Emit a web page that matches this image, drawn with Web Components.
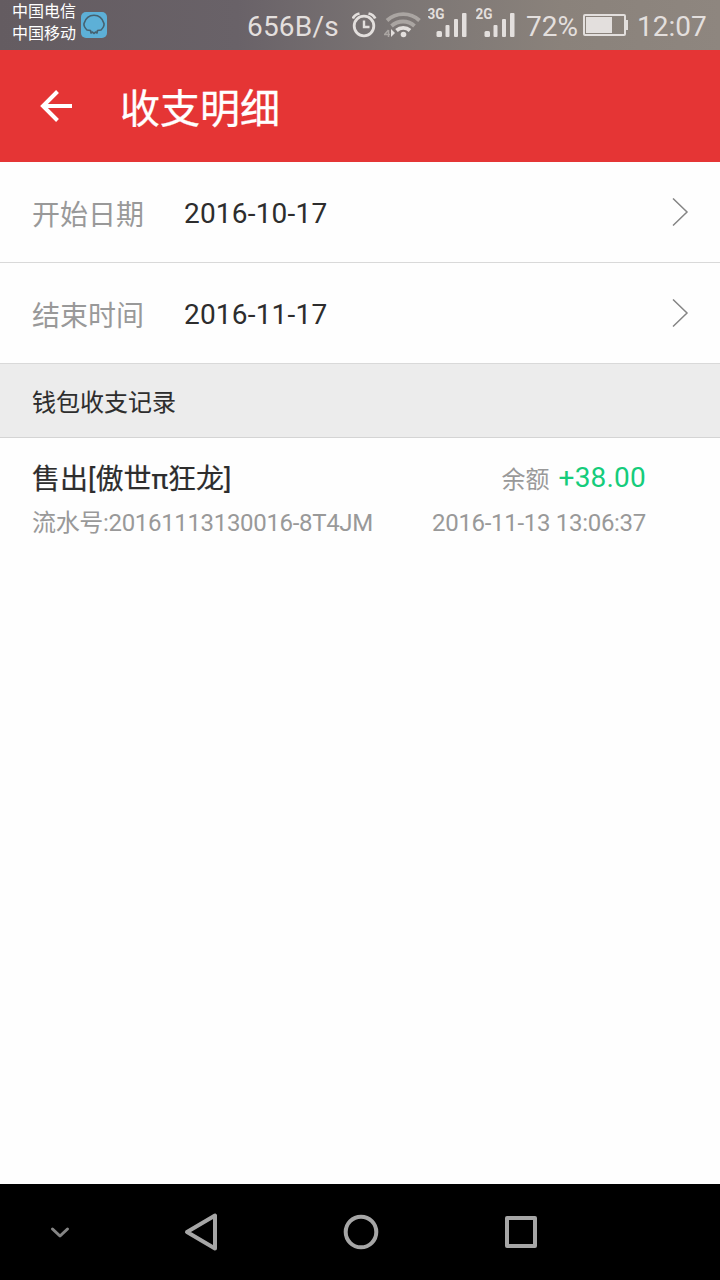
<!DOCTYPE html>
<html lang="zh-CN">
<head>
<meta charset="utf-8">
<title>收支明细</title>
<style>
  html, body {
    margin: 0;
    height: 100%;
  }

  body {
    display: flex;
    flex-direction: column;
    background: #fefefe;
    color: #2d2d2d;
    font-family: Roboto, "Noto Sans CJK SC", sans-serif;
    overflow: hidden;
  }

  main {
    flex: 1;
  }
</style>
</head>
<body>
  <status-bar speed="656B/s" battery="72%" time="12:07">
    <span>中国电信</span>
    <span>中国移动</span>
  </status-bar>
  <app-header>收支明细</app-header>
  <main>
    <date-row label="开始日期">2016-10-17</date-row>
    <date-row label="结束时间">2016-11-17</date-row>
    <section-title>钱包收支记录</section-title>
    <record-item>
      售出[傲世π狂龙]
      <span slot="label">余额</span>
      <span slot="amount">+38.00</span>
      <span slot="serial">流水号:20161113130016-8T4JM</span>
      <span slot="time">2016-11-13 13:06:37</span>
    </record-item>
  </main>
  <nav-bar></nav-bar>

<script>
class SignalIcon extends HTMLElement {
  constructor() {
    super();

    this.attachShadow({ mode: 'open' });
    this.shadowRoot.innerHTML = `
      <style>
        :host { display: block; width: 40px; height: 50px; }
        svg { display: block; }
        text { font: bold 14px Roboto, sans-serif; }
      </style>
      <svg width="40" height="50" fill="#e3dfdd">
        <text x="-.5" y="19" textLength="17" lengthAdjust="spacingAndGlyphs">${this.getAttribute('type')}</text>
        <rect x="8.500" y="31" width="5.5" height="6" rx="1.5"/>
        <rect x="17.500" y="25" width="4" height="12" rx="1"/>
        <rect x="26" y="19" width="4" height="18" rx="1"/>
        <rect x="34" y="13" width="4.500" height="24" rx="1"/>
      </svg>
    `;
  }
}

customElements.define('signal-icon', SignalIcon);

class StatusBar extends HTMLElement {
  constructor() {
    super();

    this.attachShadow({ mode: 'open' });
    this.shadowRoot.innerHTML = `
      <style>
        :host {
          display: flex;
          height: 50px;
          flex: none;
          box-sizing: border-box;
          padding: 0 12px;
          background: linear-gradient(90deg, #645c61 0%, #696268 33%, #7b7574 55%, #8a827b 78%, #8e867f 100%);
          color: #e3dfdd;
          font-size: 28px;
          line-height: 54px;
          white-space: nowrap;
        }
        svg { display: block; flex: none; }
        .carriers {
          display: flex;
          flex-direction: column;
          width: 69px;
          padding-top: 1px;
          font-size: 16px;
          line-height: 22px;
          color: #fff;
        }
        .speed { width: 105px; margin-left: 140px; letter-spacing: 0.2px; }
        .clock { width: 32px; }
        .wifi { width: 44px; }
        .battery { width: 57px; margin-left: 10px; }
        signal-icon + signal-icon { margin-left: 8px; }
        .battery-icon { margin-right: 9px; }
      </style>
      <div class="carriers"><slot></slot></div>
      <svg width="26" height="50">
        <rect y="12" width="26" height="26" rx="5" fill="#5db0d7"/>
        <path d="M10 33L9.500 30.500L6 30C4 28 2.500 26 3 23.500C4.500 18.500 8.500 15.300 13 15.300S21.500 18.500 23 23.500C23.500 26 22 28 20 30L16.500 30.500L16 33L14.500 32L13 33.500L11.500 32Z" fill="none" stroke="#46616f" stroke-width="1.6" stroke-linejoin="round"/>
      </svg>
      <div class="speed">${this.getAttribute('speed')}</div>
      <svg class="clock" width="32" height="50" fill="none" stroke="#e3dfdd">
        <circle cx="12" cy="26" r="9.800" stroke-width="2.800"/>
        <path d="M12 20.500v6.500h5.500" stroke-width="2.400"/>
        <path d="M.8 18.500C1.900 16 4.300 14.200 7.500 13.500M16.500 13.500C19.700 14.200 22.100 16 23.200 18.500" stroke-width="2.800"/>
      </svg>
      <svg class="wifi" width="44" height="50" fill="none">
        <path d="M3 20.500A24 24 0 0 1 35.500 20.500" stroke="#aaa5a2" stroke-width="3.800"/>
        <path d="M7.500 26A17 17 0 0 1 30.500 26" stroke="#aaa5a2" stroke-width="3.800"/>
        <path d="M12.500 30.500A10 10 0 0 1 26 30.500" stroke="#e3dfdd" stroke-width="3.800"/>
        <circle cx="19.500" cy="34.500" r="2.800" fill="#e3dfdd"/>
        <path d="M4.500 30v7M6 34.500H.5L4.500 30" stroke="#aaa5a2" stroke-width="1.500"/>
        <path d="M7 29v8L11 33Z" fill="#e3dfdd"/>
      </svg>
      <signal-icon type="3G"></signal-icon>
      <signal-icon type="2G"></signal-icon>
      <div class="battery">${this.getAttribute('battery')}</div>
      <svg class="battery-icon" width="45" height="50">
        <rect x="1" y="15" width="41" height="20" rx="1" fill="none" stroke="#e3dfdd" stroke-width="2"/>
        <rect x="3" y="17" width="26" height="16" fill="#e3dfdd"/>
        <path d="M43 20h2v10h-2z" fill="#e3dfdd"/>
      </svg>
      <div class="time">${this.getAttribute('time')}</div>
    `;
  }
}

customElements.define('status-bar', StatusBar);

class AppHeader extends HTMLElement {
  constructor() {
    super();

    this.attachShadow({ mode: 'open' });
    this.shadowRoot.innerHTML = `
      <style>
        :host {
          display: flex;
          flex: none;
          align-items: center;
          gap: 48px;
          height: 112px;
          box-sizing: border-box;
          padding-left: 40px;
          background: #e53535;
          color: #fff;
          font-size: 40px;
          line-height: 104px;
          -webkit-text-stroke: 0.3px;
        }
        div { padding-top: 8px; }
      </style>
      <svg width="32" height="32" fill="none" stroke="#fff" stroke-width="4">
        <path d="M32 16H3M17.500 1.500L3 16L17.500 30.500"/>
      </svg>
      <div><slot></slot></div>
    `;
  }
}

customElements.define('app-header', AppHeader);

class DateRow extends HTMLElement {
  constructor() {
    super();

    this.attachShadow({ mode: 'open' });
    this.shadowRoot.innerHTML = `
      <style>
        :host {
          display: flex;
          align-items: center;
          height: 101px;
          box-sizing: border-box;
          padding: 0 31px 0 32px;
          border-bottom: 1px solid #d9d9d9;
          font-size: 28px;
          line-height: 40px;
        }
        .label {
          width: 152px;
          padding-top: 8px;
          color: #999;
        }
        .value { flex: 1; padding-top: 4px; letter-spacing: 0.2px; }
      </style>
      <div class="label">${this.getAttribute('label')}</div>
      <div class="value"><slot></slot></div>
      <svg width="17" height="28" fill="none" stroke="#858585" stroke-width="1.500">
        <path d="M1 .5L15 14L1 27.500"/>
      </svg>
    `;
  }
}

customElements.define('date-row', DateRow);

class SectionTitle extends HTMLElement {
  constructor() {
    super();

    this.attachShadow({ mode: 'open' });
    this.shadowRoot.innerHTML = `
      <style>
        :host {
          display: block;
          height: 74px;
          box-sizing: border-box;
          padding-left: 32px;
          border-bottom: 1px solid #d4d4d4;
          background: #ececec;
          font-size: 24px;
          line-height: 78px;
          -webkit-text-stroke: 0.1px;
        }
      </style>
      <slot></slot>
    `;
  }
}

customElements.define('section-title', SectionTitle);

class RecordItem extends HTMLElement {
  constructor() {
    super();

    this.attachShadow({ mode: 'open' });
    this.shadowRoot.innerHTML = `
      <style>
        :host {
          display: block;
          padding: 18px 74px 0 32px;
          white-space: nowrap;
        }
        .row {
          display: flex;
          justify-content: space-between;
          font-size: 28px;
          line-height: 44px;
        }
        .title { padding-top: 2px; -webkit-text-stroke: 0.2px; }
        .right { display: flex; gap: 9px; }
        .label { padding-top: 2px; font-size: 24px; color: #999; }
        .amount { color: #15cc7b; letter-spacing: 0.2px; }
        .detail { font-size: 24px; line-height: 42px; color: #999; }
        .serial { letter-spacing: -0.33px; }
        .time { letter-spacing: -0.3px; }
      </style>
      <div class="row">
        <div class="title"><slot></slot></div>
        <div class="right">
          <div class="label"><slot name="label"></slot></div>
          <div class="amount"><slot name="amount"></slot></div>
        </div>
      </div>
      <div class="row detail">
        <div class="serial"><slot name="serial"></slot></div>
        <div class="time"><slot name="time"></slot></div>
      </div>
    `;
  }
}

customElements.define('record-item', RecordItem);

class NavBar extends HTMLElement {
  constructor() {
    super();

    this.attachShadow({ mode: 'open' });
    this.shadowRoot.innerHTML = `
      <style>
        :host {
          display: grid;
          flex: none;
          grid-template-columns: 120px 160px 160px 160px;
          place-items: center;
          height: 96px;
          background: #000;
        }
        svg { fill: none; stroke: #a6a6a6; stroke-width: 4; stroke-linejoin: round; stroke-linecap: round; }
      </style>
      <svg width="40" height="40"><path d="M12.500 17L20 24L27.500 17" style="stroke: #858585; stroke-width: 3"/></svg>
      <svg width="40" height="40"><path d="M35 3.500V36.500L7 20Z"/></svg>
      <svg width="40" height="40"><circle cx="21" cy="20" r="15.300"/></svg>
      <svg width="40" height="40"><rect x="7" y="6" width="28" height="28"/></svg>
    `;
  }
}

customElements.define('nav-bar', NavBar);
</script>
</body>
</html>
